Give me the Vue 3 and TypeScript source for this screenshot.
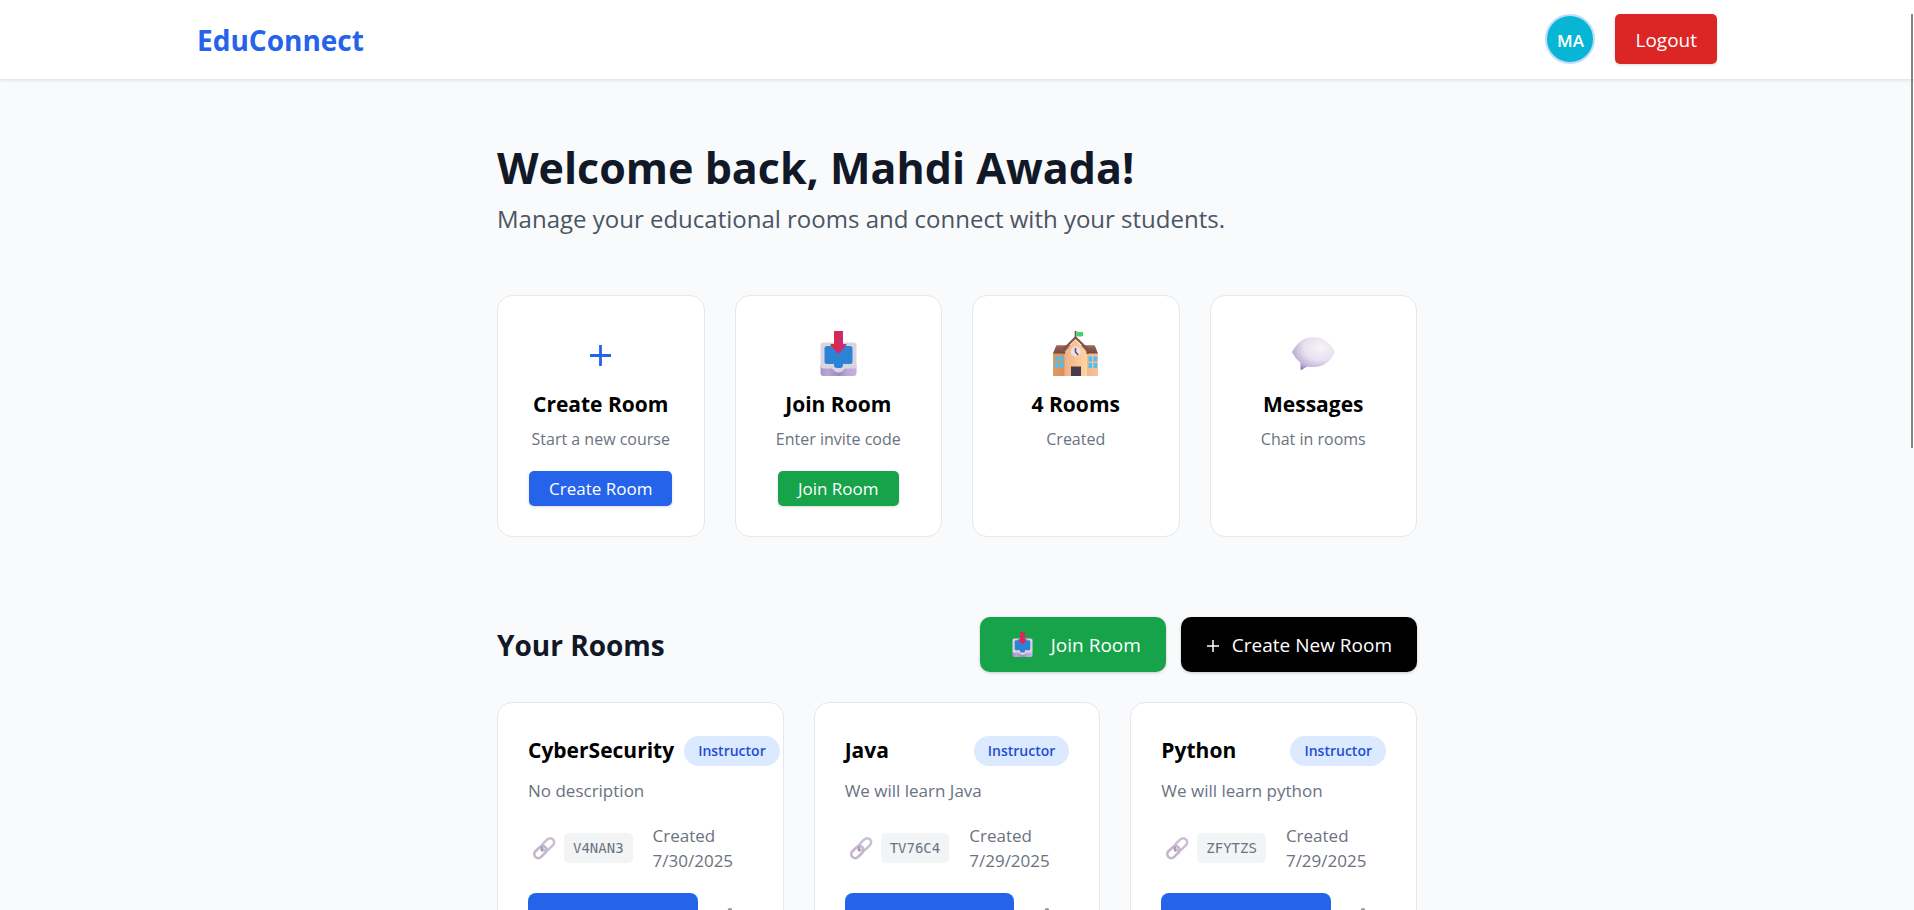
<script setup lang="ts">
interface Stat {
  icon: 'plus' | 'tray' | 'school' | 'bubble'
  title: string
  text: string
  action?: string
  tone?: 'blue' | 'green'
}

interface Room {
  name: string
  role: string
  description: string
  code: string
  created: string
}

const stats: Stat[] = [
  { icon: 'plus', title: 'Create Room', text: 'Start a new course', action: 'Create Room', tone: 'blue' },
  { icon: 'tray', title: 'Join Room', text: 'Enter invite code', action: 'Join Room', tone: 'green' },
  { icon: 'school', title: '4 Rooms', text: 'Created' },
  { icon: 'bubble', title: 'Messages', text: 'Chat in rooms' },
]

const rooms: Room[] = [
  { name: 'CyberSecurity', role: 'Instructor', description: 'No description', code: 'V4NAN3', created: '7/30/2025' },
  { name: 'Java', role: 'Instructor', description: 'We will learn Java', code: 'TV76C4', created: '7/29/2025' },
  { name: 'Python', role: 'Instructor', description: 'We will learn python', code: 'ZFYTZS', created: '7/29/2025' },
]
</script>

<template>
  <div class="page">
    <svg class="defs" width="0" height="0" aria-hidden="true">
      <defs>
        <linearGradient id="arrow" x1="0" x2="1" y1="0" y2="0">
          <stop offset="0" stop-color="#e9222d" />
          <stop offset="1" stop-color="#bd3090" />
        </linearGradient>
        <linearGradient id="trayBase" x1="0" x2="1" y1="0" y2="0">
          <stop offset="0" stop-color="#a893c4" />
          <stop offset="0.2" stop-color="#bba6d6" />
          <stop offset="0.5" stop-color="#9c88ba" />
          <stop offset="0.75" stop-color="#bca9da" />
          <stop offset="1" stop-color="#c3b1df" />
        </linearGradient>
        <linearGradient id="wall" x1="0" x2="1" y1="0" y2="0">
          <stop offset="0" stop-color="#eeb184" />
          <stop offset="1" stop-color="#ffd6a3" />
        </linearGradient>
        <linearGradient id="wing" x1="0" x2="1" y1="0" y2="0">
          <stop offset="0" stop-color="#e39a58" />
          <stop offset="0.25" stop-color="#d98f5f" />
          <stop offset="0.75" stop-color="#eeb98c" />
          <stop offset="1" stop-color="#f6c1a2" />
        </linearGradient>
        <linearGradient id="roof" x1="0" x2="0" y1="0" y2="1">
          <stop offset="0" stop-color="#a1675a" />
          <stop offset="1" stop-color="#70493f" />
        </linearGradient>
        <radialGradient id="bubbleFill" cx="0.66" cy="0.32" r="0.76">
          <stop offset="0" stop-color="#f6f3f8" />
          <stop offset="0.5" stop-color="#e9e1f0" />
          <stop offset="0.82" stop-color="#c4b4da" />
          <stop offset="1" stop-color="#9580c6" />
        </radialGradient>
        <symbol id="plus" viewBox="0 0 45 45">
          <path d="M22.500 14v21M12 24.500h21" fill="none" stroke="currentColor" stroke-width="2.800" />
        </symbol>
        <symbol id="tray" viewBox="0 0 45 45">
          <path d="M4.500 34h36v8q0 3-3 3H7.500q-3 0-3-3z" fill="url(#trayBase)" />
          <path d="M7.500 11.500h30q3 0 3 3v20q0 3-3 3h-8q-1 0-2 1.500-2 2.500-5 2.500t-5-2.500q-1-1.500-2-1.500h-8q-3 0-3-3v-20q0-3 3-3z" fill="#d9d4e2" />
          <path d="M11 15h23q2.500 0 2.500 2.500v13q0 2.500-2.500 2.500h-7v1q0 3-3 3h-3q-3 0-3-3v-1h-7q-2.500 0-2.500-2.500v-13Q8.500 15 11 15z" fill="#2c83d4" />
          <path d="M18 0h9v13h3q1 .2.400 1.200L22.500 23l-7.900-8.800q-.6-1 .4-1.200h3z" fill="url(#arrow)" />
        </symbol>
        <symbol id="school" viewBox="0 0 45 45">
          <path d="M0 22h45v23H0z" fill="url(#wing)" />
          <path d="M3 15q.3-.8 1.200-.8h36.600q.9 0 1.200.8l3 7.500H0z" fill="url(#roof)" />
          <path d="M11.500 21 22.500 8.500 34 21v24H11.500z" fill="url(#wall)" />
          <path d="M11 23v-5L22.500 6.500 34.500 18V23" fill="none" stroke="#825247" stroke-width="2.200" />
          <path d="M22.500 0v8" stroke="#765044" stroke-width="1.600" />
          <path d="M23.300.4q3 1 6.700.6v4q-3.500 1-6.700 0z" fill="#43d46d" />
          <circle cx="22.800" cy="20.500" r="5" fill="#e9dfed" />
          <path d="M22.500 17v4l2.700 3" fill="none" stroke="#75504e" stroke-width="1.600" />
          <path d="M18 35.500h10V45H18z" fill="#46384d" />
          <path d="M2 25.500h3.500v5H2zM7 25.500h3.500v5H7zM2 32h3.500v5H2zM7 32h3.500v5H7zM35.500 25.500H39v5h-3.500zM40.500 25.500H44v5h-3.500zM35.500 32H39v5h-3.500zM40.500 32H44v5h-3.500z" fill="#45c2f7" />
        </symbol>
        <symbol id="bubble" viewBox="0 0 45 45">
          <path d="M1 21Q9 6 22.500 6T44 21Q37 36 22.500 36q-3 0-6-.5-3 1.200-5.500 3.300-1.500 1-1.500-1v-6Q4 27.500 1 21z" fill="url(#bubbleFill)" />
        </symbol>
        <symbol id="link" viewBox="0 0 24 24">
          <g fill="none" stroke-width="2.600">
            <rect x="9" y="4.400" width="14" height="8" rx="4" transform="rotate(-45 16 8.400)" stroke="#cbbfd2" />
            <rect x="1.400" y="12" width="14" height="8" rx="4" transform="rotate(-45 8.400 16)" stroke="#c4b6cc" />
            <path d="M10 11.500q-1.200 2 .3 3.300" stroke="#a894b4" stroke-width="2" stroke-linecap="round" />
          </g>
        </symbol>
        <symbol id="gear" viewBox="0 0 24 24">
          <g fill="none" stroke="#9794a1">
            <circle cx="12" cy="12" r="6" stroke-width="4" />
            <path d="M12 3.500v2M12 18.500v2M3.500 12h2M18.500 12h2M6 6l1 1M17 17l1 1M6 18l1-1M17 7l1-1" stroke-width="5" stroke-linecap="round" />
          </g>
        </symbol>
      </defs>
    </svg>

    <header class="topbar">
      <div class="topbar-inner">
        <a class="brand" href="#">EduConnect</a>
        <div class="account">
          <span class="avatar">MA</span>
          <button class="logout" type="button">Logout</button>
        </div>
      </div>
    </header>

    <main class="content">
      <section class="welcome">
        <h1>Welcome back, Mahdi Awada!</h1>
        <p>Manage your educational rooms and connect with your students.</p>
      </section>

      <section class="stats">
        <article v-for="stat in stats" :key="stat.title" class="card stat">
          <svg class="stat-icon" aria-hidden="true"><use :href="'#' + stat.icon" /></svg>
          <h3>{{ stat.title }}</h3>
          <p>{{ stat.text }}</p>
          <button v-if="stat.action" class="small-button" :class="stat.tone" type="button">{{ stat.action }}</button>
        </article>
      </section>

      <section>
        <div class="section-head">
          <h2>Your Rooms</h2>
          <div class="section-actions">
            <button class="large-button green" type="button">
              <svg class="tray-icon" aria-hidden="true"><use href="#tray" /></svg>
              Join Room
            </button>
            <button class="large-button black" type="button">
              <svg class="plus-icon" viewBox="0 0 14 14" aria-hidden="true"><path d="M7 2v12M1 8h12" /></svg>
              Create New Room
            </button>
          </div>
        </div>

        <div class="rooms">
          <article v-for="room in rooms" :key="room.code" class="card room">
            <div class="room-head">
              <h3>{{ room.name }}</h3>
              <span class="badge">{{ room.role }}</span>
            </div>
            <p>{{ room.description }}</p>
            <div class="meta">
              <span class="invite">
                <svg class="link-icon" aria-hidden="true"><use href="#link" /></svg>
                <code>{{ room.code }}</code>
              </span>
              <span class="created">Created {{ room.created }}</span>
            </div>
            <div class="room-actions">
              <button class="open blue" type="button" :aria-label="room.name"></button>
              <button class="settings" type="button" aria-label="Settings">
                <svg aria-hidden="true"><use href="#gear" /></svg>
              </button>
            </div>
          </article>
        </div>
      </section>
    </main>

    <div class="scroll-thumb"></div>
  </div>
</template>

<style>
body {
  margin: 0;
  background: #f9fafb;
}
</style>

<style scoped>
.page {
  position: relative;
  height: 100vh;
  overflow: hidden;
  background: #f9fafc;
  color: #000;
  font-family: "Open Sans", "Noto Sans", sans-serif;
  font-size: 17px;
  line-height: 25px;
}

.defs {
  position: absolute;
}

h1,
h2,
h3,
p {
  margin: 0;
}

button {
  border: 0;
  padding: 0;
  font-family: inherit;
  color: #fff;
  cursor: pointer;
}

.topbar {
  padding: 14px 40px 15px;
  background: #fff;
  border-bottom: 1px solid #e5e7eb;
  box-shadow: 0 1px 3px rgba(0, 0, 0, 0.08);
}

.topbar-inner {
  display: flex;
  align-items: center;
  justify-content: space-between;
  max-width: 1520px;
  margin: 0 auto;
}

.brand {
  padding-top: 2px;
  color: #2563eb;
  font-size: 28px;
  font-weight: 700;
  text-decoration: none;
}

.account {
  display: flex;
  gap: 20px;
}

.avatar {
  display: flex;
  align-items: center;
  justify-content: center;
  box-sizing: border-box;
  width: 50px;
  height: 50px;
  padding-top: 2px;
  border: 2px solid #bfdbfe;
  border-radius: 50%;
  background: #06b6d4;
  color: #fff;
  font-weight: 600;
}

.logout {
  height: 50px;
  padding: 2px 20px 0;
  border-radius: 5px;
  background: #dc2626;
  font-size: 19px;
  box-shadow: 0 1px 3px rgba(0, 0, 0, 0.15);
}

.content {
  max-width: 920px;
  margin: 0 auto;
  padding: 63px 40px 60px;
}

.welcome {
  margin-bottom: 59px;
}

h1 {
  margin-bottom: 8px;
  color: #111827;
  font-size: 43px;
  line-height: 50px;
}

.welcome p {
  color: #4b5563;
  font-size: 24px;
  line-height: 35px;
}

.card {
  box-sizing: border-box;
  min-width: 0;
  padding: 30px;
  border: 1px solid #e5e7eb;
  border-radius: 15px;
  background: #fff;
}

.card h3 {
  font-size: 21px;
  line-height: 35px;
}

.card p {
  color: #6b7280;
}

.stats {
  display: grid;
  grid-template-columns: repeat(4, 1fr);
  gap: 30px;
  margin-bottom: 80px;
}

.stat {
  display: flex;
  flex-direction: column;
  align-items: center;
  padding: 35px 20px 30px;
}

.stat-icon {
  width: 45px;
  height: 45px;
  margin-bottom: 11px;
  color: #2563eb;
}

.card.stat p {
  margin-top: 5px;
  font-size: 16px;
}

.small-button {
  height: 35px;
  margin-top: 19px;
  padding: 0 20px;
  border-radius: 5px;
  font-size: 17px;
  box-shadow: 0 1px 3px rgba(0, 0, 0, 0.15);
}

.blue {
  background: #2563eb;
}

.green {
  background: #16a34a;
}

.black {
  background: #000;
}

.section-head {
  display: flex;
  align-items: center;
  justify-content: space-between;
  margin-bottom: 30px;
}

h2 {
  color: #111827;
  font-size: 28px;
  line-height: 40px;
}

.section-actions {
  display: flex;
  gap: 15px;
}

.large-button {
  display: flex;
  align-items: center;
  gap: 12px;
  height: 55px;
  padding: 0 25px;
  border-radius: 10px;
  font-size: 19px;
  box-shadow: 0 1px 3px rgba(0, 0, 0, 0.2);
}

.tray-icon {
  width: 25px;
  height: 25px;
  margin: 0 4px 0 5px;
}

.plus-icon {
  width: 14px;
  height: 14px;
  fill: none;
  stroke: #fff;
  stroke-width: 1.5px;
}

.rooms {
  display: grid;
  grid-template-columns: repeat(3, 1fr);
  gap: 30px;
}

.room-head {
  display: flex;
  align-items: center;
  justify-content: space-between;
  gap: 10px;
  margin-bottom: 10px;
}

.badge {
  padding: 0 14px;
  border-radius: 15px;
  background: #dbeafe;
  color: #1d4ed8;
  font-size: 14px;
  font-weight: 600;
  line-height: 30px;
}

.meta {
  display: flex;
  align-items: center;
  gap: 20px;
  margin: 20px 0;
  color: #6b7280;
}

.invite {
  display: flex;
  align-items: center;
  gap: 8px;
}

.link-icon {
  width: 24px;
  height: 24px;
  margin-left: 4px;
}

.invite code {
  padding: 0 9px;
  border-radius: 5px;
  background: #f3f4f6;
  font-family: "DejaVu Sans Mono", monospace;
  font-size: 14px;
  line-height: 30px;
}

.created {
  flex: 1;
}

.room-actions {
  display: flex;
  gap: 10px;
}

.open {
  flex: 1;
  height: 50px;
  border-radius: 8px;
}

.settings {
  display: flex;
  align-items: center;
  justify-content: center;
  width: 45px;
  height: 50px;
  background: transparent;
}

.settings svg {
  width: 22px;
  height: 22px;
}

.scroll-thumb {
  position: absolute;
  top: 14px;
  right: 1px;
  width: 2px;
  height: 434px;
  background: #858585;
}
</style>
